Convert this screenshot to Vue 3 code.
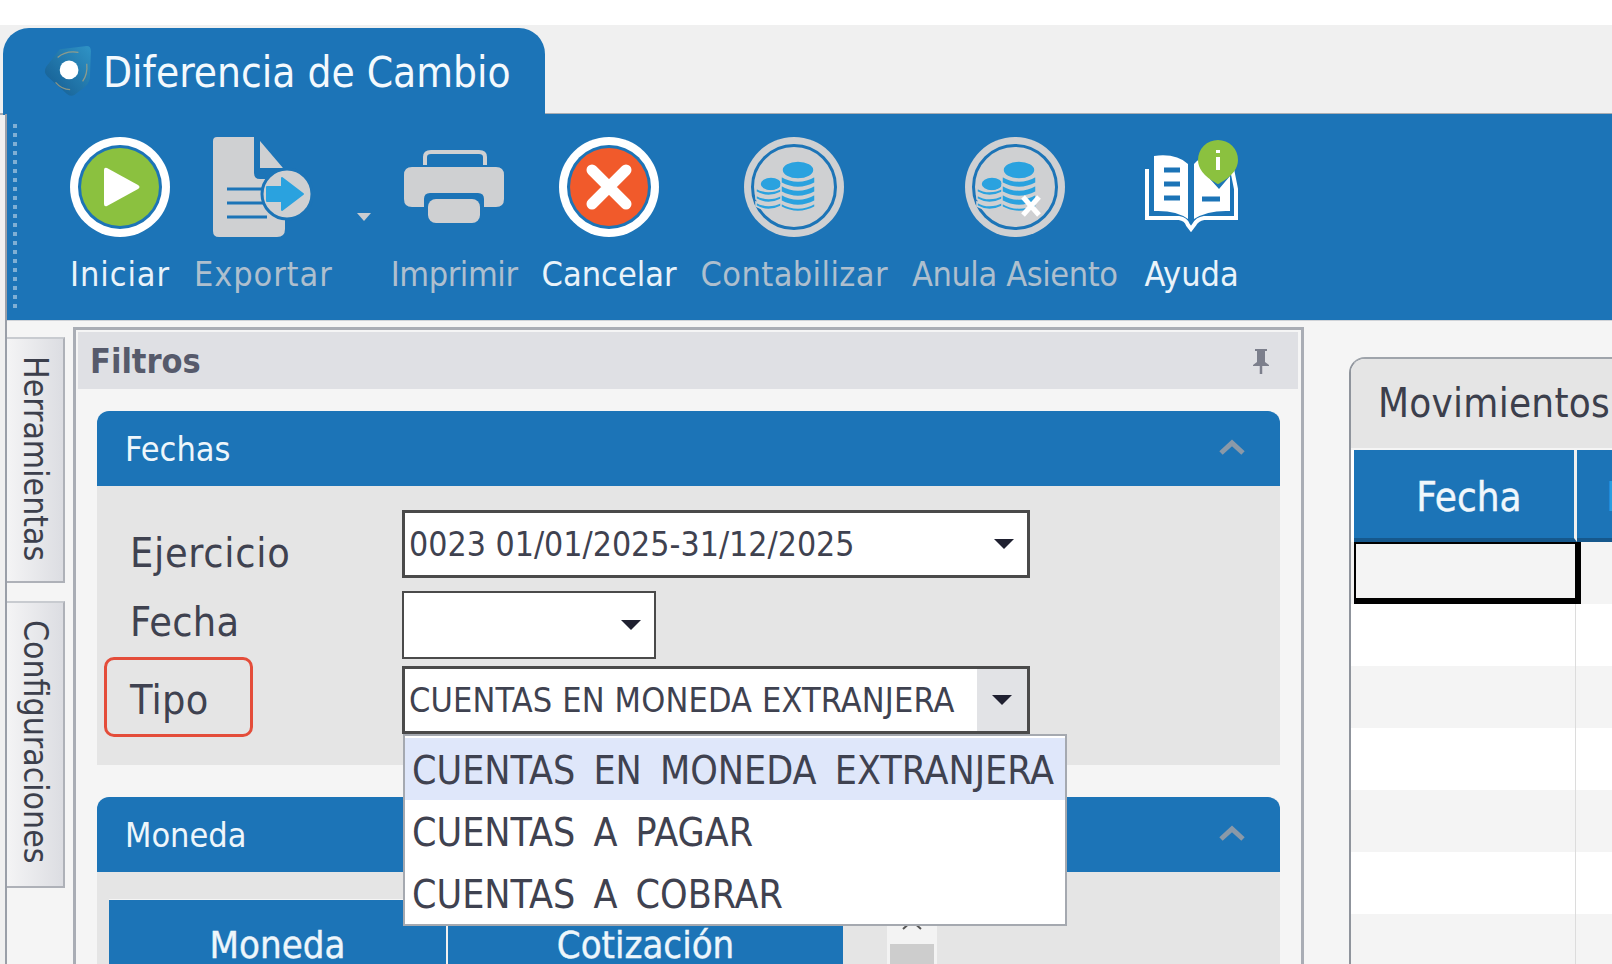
<template>
  <div class="app">
    <div class="top-strip"></div>

    <div class="tabbar">
      <div class="tab">
        <svg class="logo" width="48" height="52" viewBox="0 0 46 50">
          <defs>
            <linearGradient id="logoFill" x1="1" y1="0" x2="0" y2="1">
              <stop offset="0" stop-color="#2f93c6" />
              <stop offset="1" stop-color="#145a8f" />
            </linearGradient>
          </defs>
          <path d="M16 4 L42 1 Q46 1 46 6 L45 32 Q44 38 38 42 L30 48 Q27 50 23 47 L4 30 Q0 26 3 21 Z" fill="url(#logoFill)" />
          <path d="M14 12 Q22 5 34 7 M42 18 Q43 28 38 35 M12 36 Q18 43 26 43" fill="none" stroke="#b9a77a" stroke-width="1.2" opacity=".7" />
          <circle cx="25" cy="24" r="9" fill="#fff" />
        </svg>
        <span class="tab-title">Diferencia de Cambio</span>
      </div>
    </div>

    <div class="workspace">
      <div class="toolbar">
        <div class="grip"></div>
        <template v-for="tool in tools" :key="tool.label">
          <div class="tool" :class="{ disabled: tool.disabled }">
            <div class="tool-icon">
              <svg v-if="tool.icon === 'play'" width="100" height="100" viewBox="0 0 100 100">
                <circle cx="50" cy="50" r="50" fill="#fff" />
                <circle cx="50" cy="50" r="42" fill="#1c74b7" />
                <circle cx="50" cy="50" r="39" fill="#8bc13f" />
                <path d="M37 31 L68 48 Q71 50 68 52 L37 69 Q34 70 34 67 L34 33 Q34 30 37 31 Z" fill="#fff" />
              </svg>
              <svg v-else-if="tool.icon === 'export'" width="100" height="100" viewBox="0 0 100 100">
                <path d="M4 0 H41 V36 Q41 42 47 42 H72 V92 Q72 100 64 100 H6 Q0 100 0 94 V4 Q0 0 4 0 Z" fill="#cfd0d2" />
                <path d="M47 4 L70 31 H47 Z" fill="#cfd0d2" />
                <path d="M14 52 H50 M14 66 H50 M14 80 H54" stroke="#1c74b7" stroke-width="3" />
                <circle cx="74" cy="57" r="25" fill="#cfd0d2" stroke="#1c74b7" stroke-width="3" />
                <path d="M54 50 H69 V41 L90 57 L69 73 V64 H54 Z" fill="#2aa2df" stroke="#2aa2df" stroke-width="2" stroke-linejoin="round" />
              </svg>
              <svg v-else-if="tool.icon === 'print'" width="100" height="100" viewBox="0 0 100 100">
                <path d="M21 28 V20 Q21 15 27 15 H75 Q81 15 81 20 V28" fill="none" stroke="#cfd0d2" stroke-width="4" />
                <path d="M8 30 H92 Q100 30 100 38 V62 Q100 70 92 70 H80 V62 Q80 56 74 56 H26 Q20 56 20 62 V70 H8 Q0 70 0 62 V38 Q0 30 8 30 Z" fill="#cfd0d2" />
                <rect x="24" y="62" width="52" height="24" rx="8" fill="#cfd0d2" />
              </svg>
              <svg v-else-if="tool.icon === 'cancel'" width="100" height="100" viewBox="0 0 100 100">
                <circle cx="50" cy="50" r="50" fill="#fff" />
                <circle cx="50" cy="50" r="42" fill="#1c74b7" />
                <circle cx="50" cy="50" r="39" fill="#f15a2b" />
                <path d="M33 33 L67 67 M67 33 L33 67" stroke="#fff" stroke-width="11" stroke-linecap="round" />
              </svg>
              <svg v-else-if="tool.icon === 'coins' || tool.icon === 'coinsx'" width="100" height="100" viewBox="0 0 100 100">
                <circle cx="50" cy="50" r="50" fill="#cfd0d2" />
                <circle cx="50" cy="50" r="41.5" fill="none" stroke="#1c74b7" stroke-width="3" />
                <g fill="#2aa2df" stroke="#cfd0d2" stroke-width="1.5">
                  <ellipse cx="27" cy="47" rx="11" ry="7" />
                  <path d="M12 51 Q24 58 38 51 V55 Q24 62 12 55 Z" />
                  <path d="M12 58 Q24 65 38 58 V62 Q24 69 12 62 Z" />
                  <path d="M12 65 Q24 72 38 65 V69 Q24 76 12 69 Z" />
                  <ellipse cx="54" cy="33" rx="16" ry="9" />
                  <path d="M37 39 Q54 49 71 39 V46 Q54 55 37 46 Z" />
                  <path d="M37 48 Q54 58 71 48 V55 Q54 64 37 55 Z" />
                  <path d="M37 57 Q54 67 71 57 V64 Q54 73 37 64 Z" />
                  <path d="M37 66 Q54 76 71 66 V70 Q54 79 37 70 Z" />
                </g>
                <path v-if="tool.icon === 'coinsx'" d="M58 60 L74 78 M74 60 L58 78" stroke="#fff" stroke-width="5" />
              </svg>
              <svg v-else width="96" height="96" viewBox="0 0 96 96" class="help-icon">
                <path d="M3 30 V79 H35 Q42 80 44 86 L47 90 L50 86 Q53 80 60 79 H92 V50 L88 30" fill="none" stroke="#fff" stroke-width="4" />
                <path d="M10 17 Q32 14 44 25 V80 Q32 71 10 72 Z" fill="#fff" />
                <path d="M50 25 Q56 18 66 16 V40 L75 50 L86 37 V72 Q64 71 50 80 Z" fill="#fff" />
                <path d="M20 31 H36 M20 45 H36 M20 59 H36 M58 60 H76" stroke="#1c74b7" stroke-width="5" />
                <path d="M74 1 A20 20 0 0 1 94 21 Q94 34 76 44 Q74 46 72 44 Q54 34 54 21 A20 20 0 0 1 74 1 Z" fill="#8bc13f" />
                <path d="M74 11 V14 M74 18 V31" stroke="#fff" stroke-width="4" />
              </svg>
            </div>
            <div class="tool-label" :style="{ letterSpacing: tool.spacing + 'px' }">{{ tool.label }}</div>
          </div>
          <div v-if="tool.menu" class="tool-caret"></div>
        </template>
      </div>

      <div class="body">
        <div class="side-tabs">
          <div class="side-tab tab-tools"><span>Herramientas</span></div>
          <div class="side-tab tab-config"><span>Configuraciones</span></div>
        </div>

        <div class="filters">
          <div class="filters-head">
            <span>Filtros</span>
            <svg width="22" height="26" viewBox="0 0 22 26">
              <path d="M5 1 H17 V3 H15 V14 L19 17 V18 H3 V17 L7 14 V3 H5 Z" fill="#7c7f8c" />
              <path d="M11 18 V26" stroke="#7c7f8c" stroke-width="2.5" />
            </svg>
          </div>

          <section class="group">
            <header class="group-head">
              <span>Fechas</span>
              <svg class="chevron" width="26" height="16" viewBox="0 0 26 16">
                <path d="M2 14 L13 4 L24 14" fill="none" stroke="#8a99a8" stroke-width="5" />
              </svg>
            </header>
            <div class="group-body form">
              <div class="row">
                <label class="lbl lbl-ej">Ejercicio</label>
                <div class="combo wide">
                  <span class="combo-text date-text">0023 01/01/2025-31/12/2025</span>
                  <span class="arrow"></span>
                </div>
              </div>
              <div class="row row-fecha">
                <label class="lbl lbl-fe">Fecha</label>
                <div class="combo short"><span class="combo-text"></span><span class="arrow"></span></div>
              </div>
              <div class="row row-tipo">
                <label class="lbl">Tipo</label>
                <div class="mark"></div>
                <div class="combo wide open">
                  <span class="combo-text tipo-text">CUENTAS EN MONEDA EXTRANJERA</span>
                  <span class="arrow-btn"><span class="arrow"></span></span>
                  <ul class="dropdown">
                    <li v-for="(opt, i) in tipos" :key="opt" :class="{ hover: i === 0 }">{{ opt }}</li>
                  </ul>
                </div>
              </div>
            </div>
          </section>

          <section class="group moneda">
            <header class="group-head">
              <span>Moneda</span>
              <svg class="chevron" width="26" height="16" viewBox="0 0 26 16">
                <path d="M2 14 L13 4 L24 14" fill="none" stroke="#8a99a8" stroke-width="5" />
              </svg>
            </header>
            <div class="group-body moneda-body">
              <div class="mini-table">
                <div class="mini-col first">Moneda</div>
                <div class="mini-col">Cotización</div>
              </div>
              <div class="mini-scroll">
                <svg width="24" height="12" viewBox="0 0 24 12">
                  <path d="M3 11 L12 3 L21 11" fill="none" stroke="#555" stroke-width="2" />
                </svg>
                <div class="mini-thumb"></div>
              </div>
            </div>
          </section>
        </div>

        <div class="movs">
          <div class="movs-title">Movimientos</div>
          <div class="movs-head">
            <div class="movs-col first">Fecha</div>
            <div class="movs-col second">Nro</div>
          </div>
          <div v-for="n in 7" :key="n" class="movs-row" :class="{ alt: n % 2 === 1 }">
            <div class="movs-cell" :class="{ selected: n === 1 }"></div>
          </div>
        </div>
      </div>
    </div>
  </div>
</template>

<script setup>
// spacing: ajuste fino del ancho de cada etiqueta
const tools = [
  { label: 'Iniciar', icon: 'play', spacing: 0.9 },
  { label: 'Exportar', icon: 'export', disabled: true, menu: true, spacing: 0.9 },
  { label: 'Imprimir', icon: 'print', disabled: true, spacing: -0.4 },
  { label: 'Cancelar', icon: 'cancel', spacing: 0 },
  { label: 'Contabilizar', icon: 'coins', disabled: true, spacing: 0.4 },
  { label: 'Anula Asiento', icon: 'coinsx', disabled: true, spacing: -0.4 },
  { label: 'Ayuda', icon: 'help', spacing: 0 },
]

const tipos = ['CUENTAS EN MONEDA EXTRANJERA', 'CUENTAS A PAGAR', 'CUENTAS A COBRAR']
</script>

<style>
html, body { margin: 0; background: #f0f0f0; }
</style>

<style scoped>
.app {
  width: 1612px;
  height: 964px;
  overflow: hidden;
  background: #f0f0f0;
  font-family: "DejaVu Sans Condensed", "DejaVu Sans", sans-serif;
  color: #3c3f4c;
}
.top-strip { height: 25px; background: #fff; }

.tabbar {
  height: 90px;
  box-sizing: border-box;
  padding: 3px 0 0 3px;
  border-bottom: 2px solid #a9adb3;
}
.tab {
  width: 542px;
  height: 87px;
  box-sizing: border-box;
  padding: 18px 0 0 40px;
  display: flex;
  align-items: flex-start;
  gap: 12px;
  background: #1c74b7;
  border-radius: 26px 26px 0 0;
}
.logo { flex: none; margin-top: -1px; }
.tab-title { color: #f3f9fd; font-size: 42px; line-height: 54px; white-space: nowrap; }

.workspace {
  margin-left: 5px;
  margin-top: -1px;
  border-left: 2px solid #9a9fa8;
}

.toolbar {
  position: relative;
  height: 206px;
  box-sizing: border-box;
  padding: 23px 0 0 63px;
  display: flex;
  gap: 24px;
  background: #1c74b7;
}
.grip {
  position: absolute;
  left: 6px;
  top: 10px;
  bottom: 8px;
  width: 4px;
  background: repeating-linear-gradient(to bottom, #7fafd4 0 4px, transparent 4px 9px);
}
.tool { display: flex; flex-direction: column; align-items: center; }
.tool-icon {
  width: 100px;
  height: 100px;
  display: flex;
  align-items: center;
  justify-content: center;
}
.tool-label {
  margin-top: 17px;
  font-size: 34px;
  line-height: 40px;
  color: #eaf3fa;
  white-space: nowrap;
}
.tool.disabled .tool-label { color: #aebfce; }
.tool-caret {
  align-self: flex-start;
  width: 0;
  height: 0;
  margin: 76px -4px 0 0;
  border-left: 7px solid transparent;
  border-right: 7px solid transparent;
  border-top: 8px solid #c9ccd0;
}

.body {
  height: 644px;
  display: flex;
  background: #f5f5f5;
  border-top: 1px solid #cfd3d8;
  overflow: hidden;
}

.side-tabs {
  flex: none;
  width: 58px;
  padding-top: 16px;
  display: flex;
  flex-direction: column;
  gap: 18px;
}
.side-tab {
  box-sizing: border-box;
  display: flex;
  justify-content: center;
  padding-top: 17px;
  border: 2px solid #c8cbd0;
  border-left: none;
  border-right-color: #aeb1b8;
  border-bottom-color: #aeb1b8;
  background: linear-gradient(to right, #f4f4f5, #dcdde2);
}
.side-tab span {
  writing-mode: vertical-rl;
  font-size: 33.5px;
  line-height: 36px;
  white-space: nowrap;
}
.tab-tools { height: 246px; }
.tab-config { height: 287px; }

.filters {
  flex: none;
  width: 1231px;
  height: 700px;
  box-sizing: border-box;
  margin: 6px 0 0 8px;
  padding: 2px 3px 0 2px;
  border: 3px solid #a9adb5;
  border-bottom: none;
  background: #f5f5f5;
}
.filters-head {
  height: 57px;
  box-sizing: border-box;
  padding: 0 26px 0 12px;
  display: flex;
  align-items: center;
  justify-content: space-between;
  background: #dfe0e4;
  color: #565a6b;
  font-size: 34px;
  font-weight: 700;
}

.group { margin: 22px 18px 0 19px; }
.group-head {
  height: 75px;
  box-sizing: border-box;
  padding: 0 35px 0 28px;
  display: flex;
  align-items: center;
  justify-content: space-between;
  background: #1c74b7;
  border-radius: 12px 12px 0 0;
  color: #eef6fb;
  font-size: 34px;
}
.chevron { margin-top: -4px; }
.group-body { background: #e5e5e5; }

.form { height: 279px; box-sizing: border-box; padding-top: 24px; }
.row { position: relative; display: flex; height: 68px; }
.row-fecha { margin-top: 13px; }
.row-tipo { margin-top: 7px; }
.lbl {
  flex: none;
  width: 305px;
  box-sizing: border-box;
  padding-left: 33px;
  font-size: 41px;
  line-height: 68px;
  letter-spacing: 0.3px;
  color: #3f4250;
}
.lbl-ej { padding-top: 9px; letter-spacing: 0.7px; }
.lbl-fe { margin-top: -3px; }
.mark {
  position: absolute;
  left: 7px;
  top: -9px;
  width: 149px;
  height: 80px;
  box-sizing: border-box;
  border: 3px solid #e44d3a;
  border-radius: 10px;
}
.combo {
  position: relative;
  box-sizing: border-box;
  height: 68px;
  display: flex;
  align-items: center;
  padding-left: 4px;
  background: #fff;
  border: 3px solid #4a4a4a;
}
.combo.wide { width: 628px; }
.combo.short { width: 254px; border-width: 2px; }
.combo-text {
  flex: 1;
  min-width: 0;
  font-size: 34px;
  white-space: nowrap;
  color: #3f4250;
}
.date-text { font-size: 33.6px; }
.tipo-text { letter-spacing: 0.15px; }
.arrow {
  flex: none;
  width: 0;
  height: 0;
  margin-right: 13px;
  border-left: 10px solid transparent;
  border-right: 10px solid transparent;
  border-top: 10px solid #1f2030;
}
.arrow-btn {
  flex: none;
  width: 50px;
  height: 100%;
  display: flex;
  align-items: center;
  justify-content: center;
  background: #e2e3e6;
}
.arrow-btn .arrow { margin: 0; }

.dropdown {
  position: absolute;
  z-index: 5;
  left: -2px;
  top: calc(100% + 3px);
  width: 664px;
  margin: 0;
  padding: 2px 0 0;
  box-sizing: border-box;
  height: 192px;
  list-style: none;
  background: #fff;
  border: 2px solid #a5a9b0;
}
.dropdown li {
  height: 62px;
  padding-left: 7px;
  font-size: 39px;
  line-height: 66px;
  word-spacing: 7px;
  white-space: nowrap;
  color: #3f4250;
}
.dropdown li.hover { background: #dfe7fa; }

.moneda { margin-top: 32px; }
.moneda-body {
  height: 200px;
  box-sizing: border-box;
  padding: 27px 0 0 12px;
  display: flex;
  align-items: flex-start;
}
.mini-table {
  width: 734px;
  display: flex;
  border-top: 1px solid #f5f5f5;
  background: #1c74b7;
}
.mini-col {
  flex: 1;
  height: 90px;
  box-sizing: border-box;
  padding-top: 23px;
  text-align: center;
  color: #eef6fb;
  font-size: 38px;
  -webkit-text-stroke: 0.4px #eef6fb;
}
.mini-col.first { flex: none; width: 339px; border-right: 2px solid #f0f0f0; }
.mini-scroll {
  width: 50px;
  height: 120px;
  margin-left: 44px;
  margin-top: -5px;
  padding-top: 24px;
  background: #f3f3f3;
  text-align: center;
}
.mini-scroll svg { display: block; margin: 0 auto; }
.mini-thumb { margin: 14px 3px 0; height: 80px; background: #cdcdcd; }

.movs {
  flex: none;
  width: 300px;
  margin: 36px 0 0 45px;
  border-left: 2px solid #8f949c;
  border-top: 2px solid #9fa4ab;
  border-radius: 16px 0 0 0;
  overflow: hidden;
  background: #fff;
}
.movs-title {
  height: 91px;
  box-sizing: border-box;
  padding-left: 29px;
  background: #e5e5e5;
  color: #3c3f4c;
  font-size: 40px;
  line-height: 88px;
  letter-spacing: 0.25px;
  white-space: nowrap;
  border-bottom: 2px solid #f5f5f5;
  margin-left: -2px;
}
.movs-head { display: flex; margin-left: 3px; height: 92px; }
.movs-col {
  box-sizing: border-box;
  background: #1c74b7;
  border-bottom: 4px solid #16588c;
  text-align: center;
  line-height: 94px;
  font-size: 40px;
  color: #f0f7fc;
  -webkit-text-stroke: 0.4px #f0f7fc;
}
.movs-col.first { flex: none; width: 223px; padding-left: 10px; border-right: 3px solid #f0f0f0; }
.movs-col.second { flex: 1; text-align: left; padding-left: 29px; color: #2a9ee0; -webkit-text-stroke: 0; white-space: nowrap; overflow: hidden; }
.movs-row { height: 62px; padding-left: 3px; background: #fff; }
.movs-row.alt { background: #f4f4f4; }
.movs-cell { box-sizing: border-box; width: 222px; height: 100%; border-right: 1px solid #dcdcdc; }
.movs-cell.selected {
  width: 227px;
  border: solid #000;
  border-width: 2px 6px 6px 2px;
}
</style>
